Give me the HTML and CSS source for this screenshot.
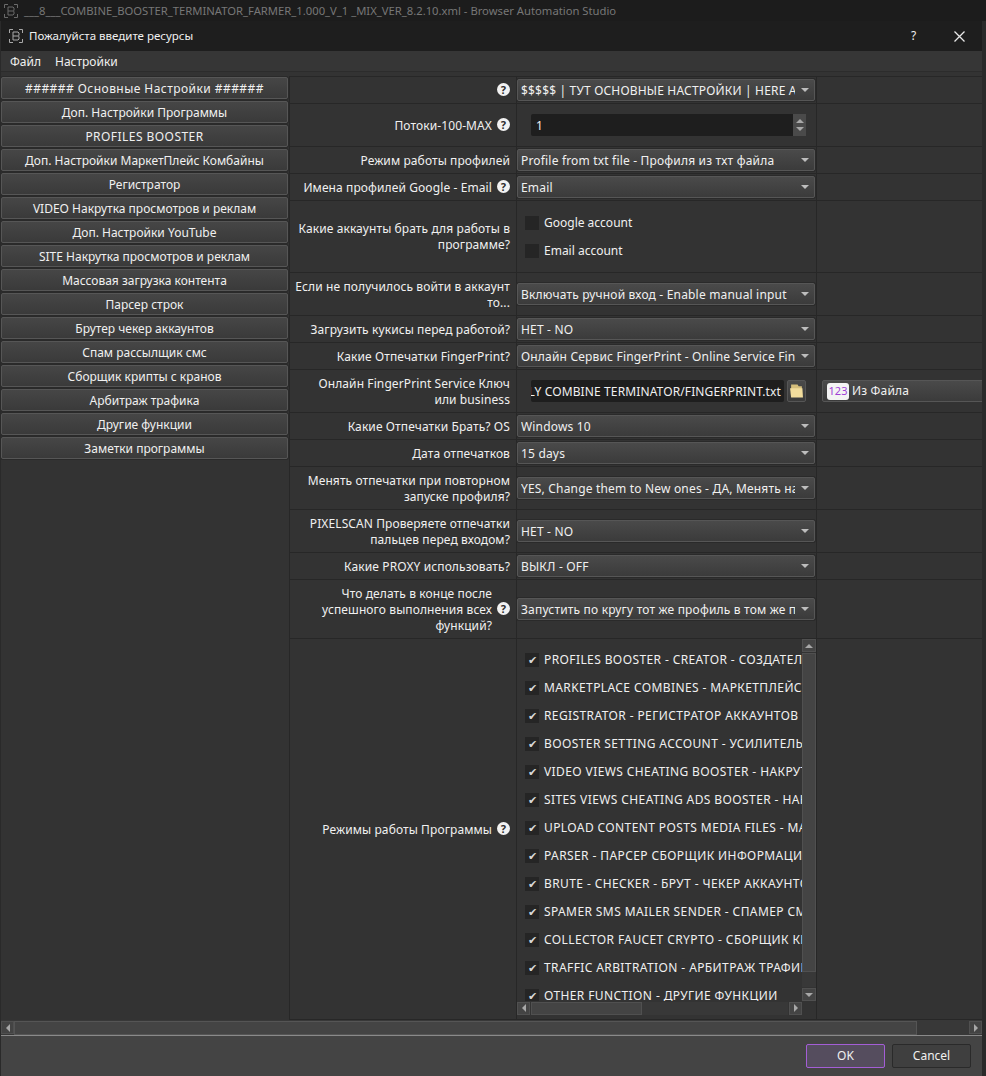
FILE: index.html
```html
<!DOCTYPE html>
<html lang="en">

<head>
    <meta charset="UTF-8">
    <title>Browser Automation Studio</title>
    <link rel="stylesheet" href="styles.css">
</head>

<body>
    <div class="app-title">
        <svg class="logo" viewBox="0 0 14 14"><path d="M.5 4V.5h3.500M10 .5h3.500V4M13.500 10v3.500H10M4 13.500H.5V10M4 3h5l1 1v2.500l-.7.5.7.5V10l-1 1H4zM4 7h5.300"/></svg>
        <span>___8___COMBINE_BOOSTER_TERMINATOR_FARMER_1.000_V_1 _MIX_VER_8.2.10.xml - Browser Automation Studio</span>
    </div>
    <div class="dialog">
        <div class="dialog-head">
            <svg class="logo light" viewBox="0 0 14 14"><path d="M.5 4V.5h3.500M10 .5h3.500V4M13.500 10v3.500H10M4 13.500H.5V10M4 3h5l1 1v2.500l-.7.5.7.5V10l-1 1H4zM4 7h5.300"/></svg>
            <span class="dialog-title">Пожалуйста введите ресурсы</span>
            <span class="head-help">?</span>
            <svg class="head-close" viewBox="0 0 11 11"><path d="M.5.5l10 10M10.500.5l-10 10"/></svg>
        </div>
        <div class="menu"><span>Файл</span><span>Настройки</span></div>

        <div class="content">
            <div class="tabs">
                <button class="wide">###### Основные Настройки ######</button>
                <button>Доп. Настройки Программы</button>
                <button class="wide">PROFILES BOOSTER</button>
                <button>Доп. Настройки МаркетПлейс Комбайны</button>
                <button>Регистратор</button>
                <button>VIDEO Накрутка просмотров и реклам</button>
                <button>Доп. Настройки YouTube</button>
                <button>SITE Накрутка просмотров и реклам</button>
                <button>Массовая загрузка контента</button>
                <button>Парсер строк</button>
                <button>Брутер чекер аккаунтов</button>
                <button>Спам рассылщик смс</button>
                <button>Сборщик крипты с кранов</button>
                <button>Арбитраж трафика</button>
                <button>Другие функции</button>
                <button>Заметки программы</button>
            </div>

            <div class="form">
                <div class="row h26">
                    <div class="label help"></div>
                    <div class="field"><div class="select"><span>$$$$$ | ТУТ ОСНОВНЫЕ НАСТРОЙКИ | HERE A</span></div></div>
                </div>
                <div class="row h42">
                    <div class="label help">Потоки-100-MAX</div>
                    <div class="field inset">
                        <div class="spin">1
                            <div class="spin-btns"><i class="up"></i><i class="down"></i></div>
                        </div>
                    </div>
                </div>
                <div class="row h26">
                    <div class="label">Режим работы профилей</div>
                    <div class="field"><div class="select"><span>Profile from txt file - Профиля из тхт файла</span></div></div>
                </div>
                <div class="row h26">
                    <div class="label help">Имена профилей Google - Email</div>
                    <div class="field"><div class="select"><span>Email</span></div></div>
                </div>
                <div class="row h72">
                    <div class="label">Какие аккаунты брать для работы в<br>программе?</div>
                    <div class="field checks">
                        <div class="check">Google account</div>
                        <div class="check">Email account</div>
                    </div>
                </div>
                <div class="row h42">
                    <div class="label">Если не получилось войти в аккаунт<br>то...</div>
                    <div class="field"><div class="select"><span>Включать ручной вход - Enable manual input</span></div></div>
                </div>
                <div class="row h26">
                    <div class="label">Загрузить кукисы перед работой?</div>
                    <div class="field"><div class="select"><span>НЕТ - NO</span></div></div>
                </div>
                <div class="row h26">
                    <div class="label">Какие Отпечатки FingerPrint?</div>
                    <div class="field"><div class="select"><span>Онлайн Сервис FingerPrint - Online Service Fingerprint</span></div></div>
                </div>
                <div class="row h42">
                    <div class="label">Онлайн FingerPrint Service Ключ<br>или business</div>
                    <div class="field inset">
                        <div class="path"><span>C:/FARMER/ONLY COMBINE TERMINATOR/FINGERPRINT.txt</span></div>
                        <div class="folder-btn">
                            <svg viewBox="0 0 12 13"><path class="folder-back" d="M1 .5h6l1 1.500h3v3H1z"/><path class="folder-front" d="M0 4h11.500l.5 8.500H1z"/></svg>
                        </div>
                    </div>
                    <div class="source">
                        <span class="badge">123</span>Из Файла
                    </div>
                </div>
                <div class="row h26">
                    <div class="label">Какие Отпечатки Брать? OS</div>
                    <div class="field"><div class="select"><span>Windows 10</span></div></div>
                </div>
                <div class="row h26">
                    <div class="label">Дата отпечатков</div>
                    <div class="field"><div class="select"><span>15 days</span></div></div>
                </div>
                <div class="row h42">
                    <div class="label">Менять отпечатки при повторном<br>запуске профиля?</div>
                    <div class="field"><div class="select"><span>YES, Change them to New ones - ДА, Менять на новые</span></div></div>
                </div>
                <div class="row h42">
                    <div class="label">PIXELSCAN Проверяете отпечатки<br>пальцев перед входом?</div>
                    <div class="field"><div class="select"><span>НЕТ - NO</span></div></div>
                </div>
                <div class="row h26">
                    <div class="label">Какие PROXY использовать?</div>
                    <div class="field"><div class="select"><span>ВЫКЛ - OFF</span></div></div>
                </div>
                <div class="row h58">
                    <div class="label help">Что делать в конце после<br>успешного выполнения всех<br>функций?</div>
                    <div class="field"><div class="select"><span>Запустить по кругу тот же профиль в том же порядке</span></div></div>
                </div>
                <div class="row last">
                    <div class="label help">Режимы работы Программы</div>
                    <div class="field list-field">
                        <div class="list">
                            <div class="list-items">
                                <div class="check on">PROFILES BOOSTER - CREATOR - СОЗДАТЕЛЬ ПРОФИЛЕЙ</div>
                                <div class="check on">MARKETPLACE COMBINES - МАРКЕТПЛЕЙС КОМБАЙНЫ</div>
                                <div class="check on">REGISTRATOR - РЕГИСТРАТОР АККАУНТОВ</div>
                                <div class="check on">BOOSTER SETTING ACCOUNT - УСИЛИТЕЛЬ АККАУНТОВ</div>
                                <div class="check on">VIDEO VIEWS CHEATING BOOSTER - НАКРУТКА ВИДЕО</div>
                                <div class="check on">SITES VIEWS CHEATING ADS BOOSTER - НАКРУТКА САЙТОВ</div>
                                <div class="check on">UPLOAD CONTENT POSTS MEDIA FILES - МАССОВАЯ ЗАГРУЗКА</div>
                                <div class="check on">PARSER - ПАРСЕР СБОРЩИК ИНФОРМАЦИИ СТРОК</div>
                                <div class="check on">BRUTE - CHECKER - БРУТ - ЧЕКЕР АККАУНТОВ</div>
                                <div class="check on">SPAMER SMS MAILER SENDER - СПАМЕР СМС РАССЫЛКА</div>
                                <div class="check on">COLLECTOR FAUCET CRYPTO - СБОРЩИК КРИПТЫ</div>
                                <div class="check on">TRAFFIC ARBITRATION - АРБИТРАЖ ТРАФИКА</div>
                                <div class="check on">OTHER FUNCTION - ДРУГИЕ ФУНКЦИИ</div>
                            </div>
                            <div class="vbar">
                                <div class="sb-btn"><i class="up"></i></div>
                                <div class="vbar-track"><div class="vbar-thumb"></div></div>
                                <div class="sb-btn"><i class="down"></i></div>
                            </div>
                            <div class="hbar">
                                <div class="sb-btn"><i class="left"></i></div>
                                <div class="hbar-track"><div class="hbar-thumb"></div></div>
                                <div class="sb-btn"><i class="right"></i></div>
                            </div>
                        </div>
                    </div>
                </div>
            </div>
        </div>

        <div class="outer-hbar">
            <div class="sb-btn"><i class="left"></i></div>
            <div class="outer-track"><div class="outer-thumb"></div></div>
            <div class="sb-btn"><i class="right"></i></div>
        </div>

        <div class="footer">
            <button class="ok">OK</button>
            <button class="cancel">Cancel</button>
        </div>
    </div>
</body>
</html>
```

FILE: styles.css
```css
/* Global styles */
* {
    box-sizing: border-box;
    margin: 0;
    padding: 0;
}

body {
    width: 986px;
    height: 1076px;
    overflow: hidden;
    background-color: #2a2a2a;
    color: #f0f0f0;
    font-family: "Noto Sans", sans-serif;
    font-size: 12px;
    line-height: 16px;
    display: flex;
    flex-direction: column;
}

.logo {
    width: 14px;
    height: 14px;
    flex: none;
    fill: none;
    stroke: #6a6a6a;
    stroke-width: 1;
}

.logo.light {
    stroke: #a8a8a8;
}

/* Main window title */
.app-title {
    height: 21px;
    flex: none;
    padding-left: 4px;
    display: flex;
    align-items: center;
    gap: 6px;
    color: #777;
    background-color: #1c1c1c;
    font-size: 11.25px;
    white-space: nowrap;
}

/* Dialog */
.dialog {
    flex: 1;
    min-height: 0;
    margin-left: 1px;
    margin-right: 4px;
    display: flex;
    flex-direction: column;
    background-color: #333;
}

.dialog-head {
    height: 30px;
    flex: none;
    background-color: #1e1e1e;
    display: flex;
    align-items: center;
    padding-left: 8px;
    font-size: 11.5px;
}

.dialog-title {
    margin-left: 6px;
    flex: 1;
}

.head-help {
    width: 40px;
    font-size: 12px;
}

.head-close {
    width: 11px;
    height: 11px;
    margin-right: 17px;
    margin-left: 3px;
    stroke: #e8e8e8;
    stroke-width: 1.3;
    fill: none;
}

.menu {
    height: 21px;
    flex: none;
    display: flex;
    gap: 14px;
    padding: 2px 0 0 9px;
    align-items: center;
    border-bottom: 1px solid #2c2c2c;
    background-color: #363636;
}

.content {
    flex: 1;
    min-height: 0;
    display: flex;
    overflow: hidden;
    margin-top: 4px;
}

/* Left buttons */
.tabs {
    width: 288px;
    flex: none;
    display: flex;
    flex-direction: column;
    gap: 2px;
    padding: 1px 1px 0 0;
}

.tabs button {
    height: 22px;
    flex: none;
    padding-top: 2px;
    border: 1px solid #565656;
    border-radius: 2px;
    box-shadow: 0 0 0 1px #2a2a2a;
    background: linear-gradient(#464646, #3a3a3a);
    color: #f0f0f0;
    font: inherit;
}

.tabs button.wide {
    letter-spacing: 0.45px;
}

/* Form */
.form {
    flex: 1;
    min-width: 0;
    border-top: 1px solid #272727;
}

.row {
    display: flex;
    border-bottom: 1px solid #272727;
}

.h26 { height: 27px; }
.h42 { height: 43px; }
.h58 { height: 59px; }
.h72 { height: 72px; }
.last { height: 381px; }

.label {
    width: 227px;
    flex: none;
    padding: 1px 6px 0 0;
    border-left: 1px solid #272727;
    text-align: right;
    letter-spacing: 0.1px;
    display: flex;
    align-items: center;
    justify-content: flex-end;
    white-space: nowrap;
}

.label.help {
    padding-right: 24px;
    position: relative;
}

.label.help::after {
    content: "?";
    position: absolute;
    right: 6px;
    top: 50%;
    width: 13px;
    height: 13px;
    margin-top: -7px;
    border-radius: 50%;
    background-color: #f2f2f2;
    color: #2b2b2b;
    font-size: 11px;
    font-weight: 700;
    line-height: 13px;
    text-align: center;
}

.field {
    width: 301px;
    flex: none;
    border-left: 1px solid #272727;
    border-right: 1px solid #272727;
    display: flex;
    align-items: center;
}

.select {
    width: 298px;
    height: 22px;
    border: 1px solid #565656;
    border-radius: 2px;
    box-shadow: 0 0 0 1px #2a2a2a;
    background: linear-gradient(#4a4a4a, #3b3b3b);
    padding: 2px 19px 0 3px;
    letter-spacing: 0.18px;
    display: flex;
    align-items: center;
    position: relative;
}

.select span {
    overflow: hidden;
    white-space: nowrap;
}

.select::after {
    content: "";
    position: absolute;
    right: 5px;
    top: 8px;
    border-left: 4px solid transparent;
    border-right: 4px solid transparent;
    border-top: 4px solid #bdbdbd;
}

.inset {
    padding-left: 14px;
}

.spin {
    width: 275px;
    height: 22px;
    background-color: #1e1e1e;
    border-radius: 2px;
    padding: 1px 0 0 5px;
    display: flex;
    align-items: center;
    justify-content: space-between;
}

.spin-btns {
    width: 13px;
    height: 22px;
    margin-top: -1px;
    background-color: #4a4a4a;
    display: flex;
    flex-direction: column;
    align-items: center;
    justify-content: space-around;
    padding: 3px 0;
}

i.up, i.down, i.left, i.right {
    display: block;
    width: 0;
    height: 0;
}

i.up {
    border-left: 4px solid transparent;
    border-right: 4px solid transparent;
    border-bottom: 4px solid #a8a8a8;
}

i.down {
    border-left: 4px solid transparent;
    border-right: 4px solid transparent;
    border-top: 4px solid #a8a8a8;
}

i.left {
    border-top: 4px solid transparent;
    border-bottom: 4px solid transparent;
    border-right: 4px solid #a8a8a8;
}

i.right {
    border-top: 4px solid transparent;
    border-bottom: 4px solid transparent;
    border-left: 4px solid #a8a8a8;
}

.path {
    width: 253px;
    height: 22px;
    background-color: #1e1e1e;
    border-radius: 2px;
    display: flex;
    align-items: center;
    justify-content: flex-end;
    overflow: hidden;
    white-space: nowrap;
    padding: 1px 3px 0 0;
    letter-spacing: 0.12px;
}

.folder-btn {
    width: 19px;
    height: 22px;
    margin-left: 3px;
    background: linear-gradient(#4a4a4a, #3b3b3b);
    border: 1px solid #565656;
    border-radius: 2px;
    display: flex;
    align-items: center;
    justify-content: center;
}

.folder-btn svg {
    width: 13px;
    height: 14px;
}

.folder-back { fill: #d6bf7c; }
.folder-front { fill: #f2dd9d; }

.source {
    width: 175px;
    height: 22px;
    flex: none;
    margin: 10px 0 0 5px;
    padding-left: 4px;
    background: linear-gradient(#4a4a4a, #3b3b3b);
    border: 1px solid #565656;
    border-radius: 2px;
    display: flex;
    align-items: center;
    gap: 3px;
    white-space: nowrap;
    letter-spacing: 0.18px;
}

.badge {
    width: 22px;
    height: 17px;
    background-color: #f4f4f4;
    border-radius: 3px;
    color: #a03fd6;
    font-size: 11px;
    letter-spacing: 0;
    text-align: center;
}

/* Checkboxes */
.checks {
    flex-direction: column;
    align-items: flex-start;
    justify-content: center;
    gap: 12px;
    padding-left: 8px;
}

.check {
    display: flex;
    align-items: center;
    gap: 5px;
    white-space: nowrap;
    height: 16px;
}

.check::before {
    content: "";
    width: 14px;
    height: 14px;
    flex: none;
    background-color: #252525;
    color: #d8d8d8;
    font-size: 11px;
    letter-spacing: 0;
    line-height: 14px;
    text-align: center;
}

.check.on::before {
    content: "✔";
}

/* Inner list with its scrollbars */
.list-field {
    align-items: flex-start;
}

.list {
    flex: 1;
    min-width: 0;
    display: grid;
    grid-template-columns: 285px 14px;
    grid-template-rows: 362px 14px;
}

.list-items {
    overflow: hidden;
    padding: 13px 0 0 8px;
    display: flex;
    flex-direction: column;
    gap: 12px;
    min-height: 0;
    letter-spacing: 0.4px;
}

.sb-btn {
    width: 13px;
    height: 13px;
    flex: none;
    background-color: #444;
    border: 1px solid #505050;
    display: flex;
    align-items: center;
    justify-content: center;
}

.vbar {
    display: flex;
    flex-direction: column;
    gap: 1px;
}

.vbar .sb-btn {
    width: 14px;
}

.vbar-track {
    flex: 1;
    background-color: #383838;
}

.vbar-thumb {
    height: 319px;
    background-color: #444;
    border: 1px solid #505050;
}

.hbar {
    display: flex;
    align-items: center;
    gap: 1px;
    grid-row: 2;
    grid-column: 1;
}

.hbar-track {
    flex: 1;
    height: 13px;
    background-color: #383838;
}

.hbar-thumb {
    width: 111px;
    height: 13px;
    background-color: #444;
    border: 1px solid #505050;
}

/* Outer scrollbar */
.outer-hbar {
    height: 15px;
    flex: none;
    display: flex;
    align-items: center;
    background-color: #383838;
}

.outer-track {
    flex: 1;
    height: 14px;
}

.outer-thumb {
    width: 903px;
    height: 14px;
    background-color: #444;
    border: 1px solid #555;
}

/* Footer */
.footer {
    height: 41px;
    flex: none;
    border-top: 1px solid #8a8a8a;
    background-color: #444;
    display: flex;
    justify-content: flex-end;
    align-items: center;
    gap: 7px;
    padding-right: 11px;
}

.footer button {
    width: 79px;
    height: 24px;
    border-radius: 2px;
    color: #f0f0f0;
    font: inherit;
}

.ok {
    background-color: #554d5e;
    border: 1px solid #a45ed6;
}

.cancel {
    background-color: #3f3f3f;
    border: 1px solid #2a2a2a;
}
```
